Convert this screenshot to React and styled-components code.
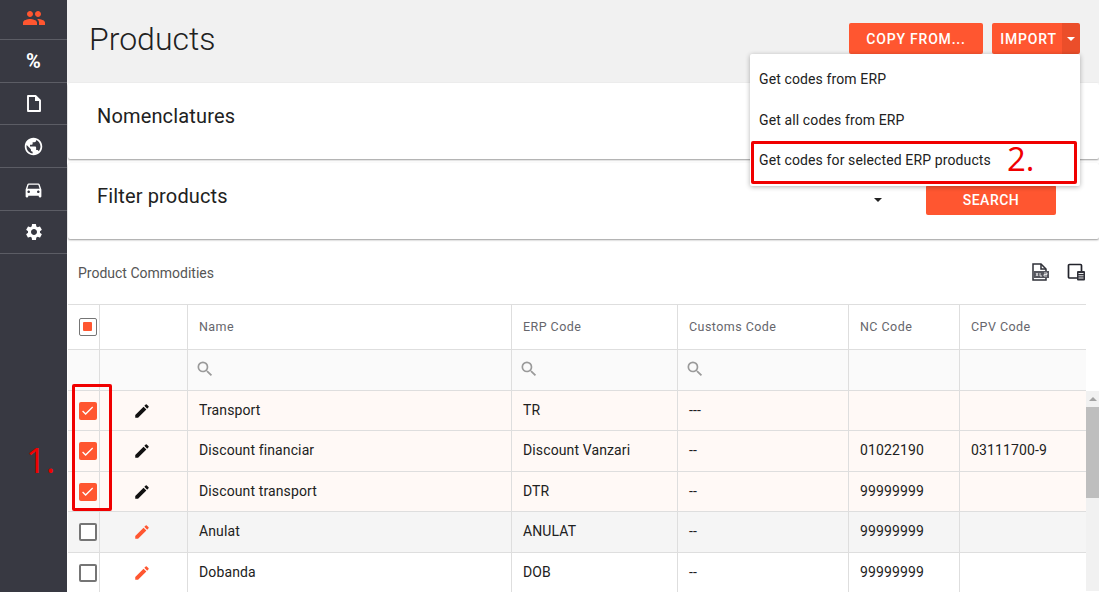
import React from "react";
import styled, { createGlobalStyle } from "styled-components";
import {
  MdPeople,
  MdPublic,
  MdDirectionsCar,
  MdSettings,
  MdEdit,
  MdSearch,
  MdCheck
} from "react-icons/md";

const GlobalStyle = createGlobalStyle`
  html, body {
    margin: 0;
    height: 592px;
    overflow: hidden;
    background: #fff;
    font-family: Roboto, "Liberation Sans", sans-serif;
    color: #212121;
  }
  * { box-sizing: border-box; }
`;

const Page = styled.div`
  position: relative;
  display: flex;
  width: 1099px;
  height: 592px;
  overflow: hidden;
`;

const Sidebar = styled.nav`
  width: 67px;
  flex: none;
  background: #383942;
`;

const SideItem = styled.div`
  display: flex;
  align-items: center;
  justify-content: center;
  height: ${props => props.h}px;
  padding-bottom: ${props => (props.active ? 3 : 0)}px;
  border-bottom: 1px solid #5c5d65;
  color: ${props => (props.active ? "#ff5630" : "#fff")};
  font-size: 20px;
  font-weight: 700;
`;

const Main = styled.main`
  flex: 1;
  min-width: 0;
  background: #fff;
`;

const Header = styled.header`
  display: flex;
  justify-content: space-between;
  height: 83px;
  padding: 23px 19px 0 22px;
  background: #f1f1f1;
`;

const Title = styled.h1`
  margin: -4px 0 0;
  font-size: 32px;
  font-weight: 300;
  line-height: 40px;
  color: #212121;
`;

const Actions = styled.div`
  display: flex;
  gap: 9px;
  height: 31px;
`;

const Button = styled.button`
  display: flex;
  align-items: center;
  justify-content: center;
  height: ${props => props.h || 31}px;
  width: ${props => props.w}px;
  padding: 0;
  border: 0;
  border-radius: 2px;
  background: #ff5630;
  color: #fff;
  font-family: inherit;
  font-size: 14px;
  font-weight: 500;
  letter-spacing: ${props => props.spacing || "0.8px"};
`;

const SplitButton = styled.div`
  display: flex;
  width: 88px;
  height: 31px;
  border-radius: 2px;
  overflow: hidden;
`;

const SplitMain = styled(Button)`
  width: 70px;
  padding-left: 3px;
  border-radius: 0;
`;

const SplitCaret = styled.div`
  display: flex;
  align-items: center;
  justify-content: center;
  width: 18px;
  background: #eb4e2a;
`;

const Caret = styled.span`
  width: 0;
  height: 0;
  border-left: 4px solid transparent;
  border-right: 4px solid transparent;
  border-top: 4px solid ${props => props.color};
`;

const Panel = styled.section`
  display: flex;
  align-items: center;
  justify-content: space-between;
  height: 76px;
  margin-left: 1px;
  margin-bottom: 4px;
  padding: 0 43px 0 29px;
  background: #fff;
  border-radius: 2px;
  box-shadow: 0 1px 2px rgba(0, 0, 0, 0.4);
  font-size: 20px;
  color: #212121;
`;

const PanelTitle = styled.div`
  position: relative;
  top: -5px;
  letter-spacing: 0.15px;
`;

const FilterControls = styled.div`
  display: flex;
  align-items: center;
  gap: 44px;
  padding-bottom: 3px;
`;

const TableTitleBar = styled.div`
  display: flex;
  align-items: center;
  justify-content: space-between;
  height: 61px;
  padding: 0 13px 2px 11px;
  font-size: 14px;
  color: #555;
`;

const ToolIcons = styled.div`
  display: flex;
  gap: 17px;
`;

const GridTable = styled.div`
  margin-left: 1px;
`;

const Row = styled.div`
  display: grid;
  grid-template-columns: 32px 88px 324px 166px 171px 111px 126px;
  width: 1018px;
  height: ${props => props.h}px;
  background: ${props => props.bg || "#fff"};
  border-top: 1px solid #dedede;
`;

const BodyArea = styled.div`
  display: flex;
`;

const Rows = styled.div`
  flex: none;
  width: 1018px;
`;

const Cell = styled.div`
  display: flex;
  align-items: center;
  justify-content: ${props => (props.center ? "center" : "flex-start")};
  padding-left: ${props => (props.center ? 0 : 11)}px;
  border-right: ${props => (props.last ? "none" : "1px solid #dedede")};
  font-size: 14px;
  letter-spacing: 0.12px;
  color: #212121;
`;

const BodyCell = styled(Cell)`
  padding-bottom: 2px;
`;

const EditCell = styled(Cell)`
  padding-right: 4px;
`;

const HeadCell = styled(Cell)`
  padding-bottom: 1px;
  font-size: 12.5px;
  letter-spacing: 0.45px;
  color: #66666c;
`;

const SearchIcon = styled(MdSearch)`
  margin-left: -4px;
  margin-bottom: 2px;
`;

const Check = styled.span`
  display: flex;
  align-items: center;
  justify-content: center;
  width: 18px;
  height: 18px;
  margin-left: 8px;
  border-radius: 2px;
  background: ${props => (props.checked ? "#ff5630" : "#fff")};
  border: ${props => (props.checked ? "none" : "2px solid #757575")};
  color: #fff;
`;

const HeadCheck = styled(Check)`
  border-width: 1px;
`;

const Dot = styled.span`
  width: 9px;
  height: 9px;
  border-radius: 1px;
  background: #ff5630;
`;

const Scrollbar = styled.div`
  flex: 1;
  display: flex;
  flex-direction: column;
  align-items: center;
  height: 201px;
  background: #f1f1f1;
  border-top: 1px solid #fff;
`;

const ScrollArrow = styled.span`
  margin: 6px 0 6px;
  width: 0;
  height: 0;
  border-left: 4px solid transparent;
  border-right: 4px solid transparent;
  border-bottom: 4px solid #a3a3a3;
`;

const ScrollThumb = styled.div`
  width: 13px;
  height: 91px;
  background: #bebebe;
`;

const Menu = styled.div`
  position: absolute;
  top: 54px;
  left: 750px;
  width: 330px;
  height: 132px;
  padding-top: 5px;
  background: #fff;
  border-radius: 2px;
  box-shadow: 0 1px 5px rgba(0, 0, 0, 0.3);
`;

const MenuItem = styled.div`
  display: flex;
  align-items: center;
  height: 40.5px;
  padding-left: 9px;
  font-size: 14px;
  letter-spacing: 0.12px;
  color: #212121;
`;

const RedBox = styled.div`
  position: absolute;
  top: ${props => props.top}px;
  left: ${props => props.left}px;
  width: ${props => props.w}px;
  height: ${props => props.h}px;
  border: 3px solid #f00000;
  border-radius: 2px;
`;

const RedLabel = styled.div`
  position: absolute;
  top: ${props => props.top}px;
  left: ${props => props.left}px;
  font-family: "Open Sans", sans-serif;
  font-size: ${props => props.size}px;
  line-height: 40px;
  color: #f00000;
`;

const FileIcon = () => (
  <svg width="14" height="17" viewBox="0 0 14 17">
    <path d="M1 1h7.500L13 5.500V16H1z" fill="none" stroke="#fff" strokeWidth="1.900" strokeLinejoin="round" />
    <path d="M8 1l5 5H8z" fill="#fff" />
  </svg>
);

const XlsIcon = () => (
  <svg width="19" height="19" viewBox="0 0 19 19">
    <path d="M2 1h8l5 5v11H2z" fill="#fff" stroke="#2f3038" strokeWidth="1.5" />
    <path d="M10 1v5h5" fill="none" stroke="#2f3038" strokeWidth="1.5" />
    <rect x="3" y="8" width="15" height="7" fill="#55565e" />
    <path d="M5 10l2 3M7 10l-2 3M9 10v3h2M13 10h3v1.500h-3V13h3" fill="none" stroke="#fff" strokeWidth="0.8" />
  </svg>
);

const ViewIcon = () => (
  <svg width="19" height="18" viewBox="0 0 19 18">
    <path d="M10 15H2.500a1 1 0 0 1-1-1V2.500a1 1 0 0 1 1-1h11a1 1 0 0 1 1 1V8" fill="none" stroke="#22232b" strokeWidth="1.700" />
    <rect x="10" y="8" width="8" height="9.500" rx="1" fill="#2f3038" />
    <path d="M11.500 10.500h5M11.500 12.800h5M11.500 15h5" stroke="#fff" strokeWidth="0.9" />
  </svg>
);

const columns = ["Name", "ERP Code", "Customs Code", "NC Code", "CPV Code"];

const products = [
  { name: "Transport", erp: "TR", customs: "---", nc: "", cpv: "", selected: true, h: 40 },
  { name: "Discount financiar", erp: "Discount Vanzari", customs: "--", nc: "01022190", cpv: "03111700-9", selected: true, h: 41 },
  { name: "Discount transport", erp: "DTR", customs: "--", nc: "99999999", cpv: "", selected: true, h: 40 },
  { name: "Anulat", erp: "ANULAT", customs: "--", nc: "99999999", cpv: "", bg: "#f5f5f5", h: 41 },
  { name: "Dobanda", erp: "DOB", customs: "--", nc: "99999999", cpv: "", h: 40 }
];

const searchable = [true, true, true, false, false];

const App = () => (
  <Page>
    <GlobalStyle />
    <Sidebar>
      <SideItem h={40} active><MdPeople size={24} /></SideItem>
      <SideItem h={43}>%</SideItem>
      <SideItem h={42}><FileIcon /></SideItem>
      <SideItem h={43}><MdPublic size={21} /></SideItem>
      <SideItem h={43}><MdDirectionsCar size={21} /></SideItem>
      <SideItem h={43}><MdSettings size={20} /></SideItem>
    </Sidebar>
    <Main>
      <Header>
        <Title>Products</Title>
        <Actions>
          <Button w={134}>COPY FROM...</Button>
          <SplitButton>
            <SplitMain>IMPORT</SplitMain>
            <SplitCaret><Caret color="#fff" /></SplitCaret>
          </SplitButton>
        </Actions>
      </Header>
      <Panel>
        <PanelTitle>Nomenclatures</PanelTitle>
      </Panel>
      <Panel>
        <PanelTitle>Filter products</PanelTitle>
        <FilterControls>
          <Caret color="#222" />
          <Button w={130} h={30} spacing="0.5px">SEARCH</Button>
        </FilterControls>
      </Panel>
      <TableTitleBar>
        <span>Product Commodities</span>
        <ToolIcons>
          <XlsIcon />
          <ViewIcon />
        </ToolIcons>
      </TableTitleBar>
      <GridTable>
        <Row h={45}>
          <HeadCell center><HeadCheck><Dot /></HeadCheck></HeadCell>
          <HeadCell />
          {columns.map((col, i) => (
            <HeadCell key={col} last={i === columns.length - 1}>{col}</HeadCell>
          ))}
        </Row>
        <Row h={41} bg="#fafafa">
          <Cell />
          <Cell />
          {searchable.map((on, i) => (
            <Cell key={i} last={i === searchable.length - 1}>
              {on && <SearchIcon size={20} color="#9a9a9a" />}
            </Cell>
          ))}
        </Row>
        <BodyArea>
          <Rows>
            {products.map(p => (
              <Row key={p.name} h={p.h} bg={p.selected ? "#fff9f6" : p.bg}>
                <Cell center>
                  <Check checked={p.selected}>
                    {p.selected && <MdCheck size={15} />}
                  </Check>
                </Cell>
                <EditCell center>
                  <MdEdit size={18} color={p.selected ? "#111" : "#ff5630"} />
                </EditCell>
                <BodyCell>{p.name}</BodyCell>
                <BodyCell>{p.erp}</BodyCell>
                <BodyCell>{p.customs}</BodyCell>
                <BodyCell>{p.nc}</BodyCell>
                <BodyCell last>{p.cpv}</BodyCell>
              </Row>
            ))}
          </Rows>
          <Scrollbar>
            <ScrollArrow />
            <ScrollThumb />
          </Scrollbar>
        </BodyArea>
      </GridTable>
    </Main>
    <Menu>
      <MenuItem>Get codes from ERP</MenuItem>
      <MenuItem>Get all codes from ERP</MenuItem>
      <MenuItem>Get codes for selected ERP products</MenuItem>
    </Menu>
    <RedBox top={141} left={751} w={326} h={43} />
    <RedBox top={384} left={72} w={40} h={127} />
    <RedLabel top={139} left={1007} size={33}>2.</RedLabel>
    <RedLabel top={440} left={26} size={35}>1.</RedLabel>
  </Page>
);

export default App;
